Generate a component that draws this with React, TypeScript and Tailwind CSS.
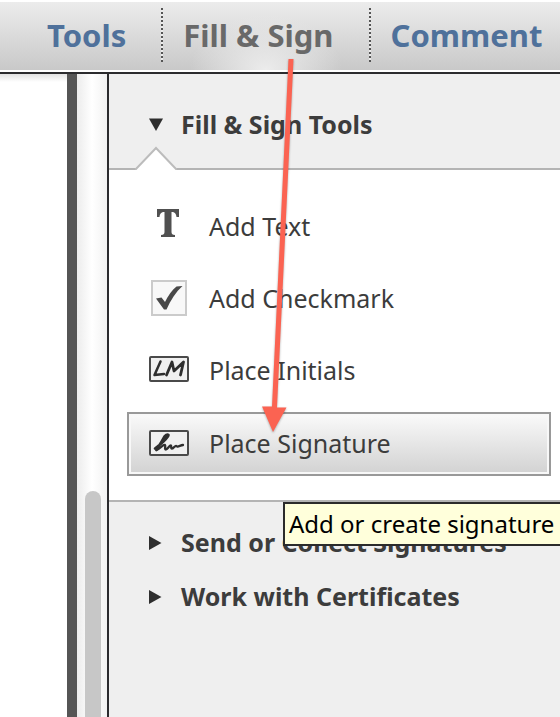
const tools = [
  { label: "Add Text", icon: <TextIcon /> },
  { label: "Add Checkmark", icon: <CheckIcon /> },
  { label: "Place Initials", icon: <InitialsIcon /> },
];

const sections = ["Send or Collect Signatures", "Work with Certificates"];

export default function App() {
  return (
    <div className="relative flex min-h-screen flex-col overflow-hidden bg-white font-['Noto_Sans','Open_Sans',sans-serif] text-[#3c3c3c]">
      <TopTabs />
      <div className="flex grow">
        {/* Document area */}
        <div className="w-[67px] shrink-0 bg-linear-to-b from-[#e2e2e2] to-white to-[8px]" />
        <div className="w-[10px] shrink-0 bg-[#555555]" />
        <ScrollTrack />
        <ToolsPane />
      </div>
      <Arrow />
    </div>
  );
}

function TopTabs() {
  return (
    <nav className="flex h-[74px] items-stretch border-b-2 border-[#2b2b2e] bg-white pt-[2px] pb-[2px] text-[31px] font-bold whitespace-nowrap">
      <div className="flex grow bg-linear-to-b from-[#ececec] to-[#c9c9c9] pl-[47px] [text-shadow:0_2px_0_#ffffff]">
        <button className="pr-[35px] pb-[2px] text-[#4f719b]">Tools</button>
        <Divider />
        <button className="bg-[radial-gradient(ellipse_76px_56px_at_50%_100%,#ececec,transparent)] pr-[35px] pb-[2px] pl-[20px] text-[#696969]">
          Fill &amp; Sign
        </button>
        <Divider />
        <button className="pb-[2px] pl-[20px] text-[#4f719b]">Comment</button>
      </div>
    </nav>
  );
}

function Divider() {
  return (
    <div className="mt-[6px] mb-[8px] w-[2px] shrink-0 bg-[repeating-linear-gradient(to_bottom,#555555_0_2px,#ececec_2px_4px)]" />
  );
}

function ScrollTrack() {
  return (
    <div className="flex w-[30px] shrink-0 bg-linear-to-r from-[#ececec] via-white to-[#f2f2f2] pt-[417px] pl-[8px]">
      <div className="w-[16px] rounded-t-full bg-[#c7c7c7]" />
    </div>
  );
}

function ToolsPane() {
  return (
    <aside className="min-w-0 grow border-l-2 border-[#2b2b2e] bg-[#efefef]">
      {/* Open section */}
      <div className="relative h-[96px] border-b-2 border-[#b4b4b4]">
        <button className="flex h-[102px] w-full items-center pl-10 text-left text-[25px] font-bold whitespace-nowrap">
          <svg className="mr-[18px] h-[14px] w-[14px]" viewBox="0 0 14 14">
            <path d="M0 0.500h14L7 13z" fill="#2e2e2e" />
          </svg>
          Fill &amp; Sign Tools
        </button>
        <svg
          className="absolute -bottom-[2px] left-[26px] h-[24px] w-[42px]"
          viewBox="0 0 42 24"
        >
          <path d="M0 24 L1 23 L21 2 L41 23 L42 24z" fill="#ffffff" />
          <path
            d="M0 23 H1 L21 2 L41 23 H42"
            fill="none"
            stroke="#bcbcbc"
            strokeWidth="2"
          />
        </svg>
      </div>
      <ul className="border-b-2 border-[#b4b4b4] bg-white pt-[21px] pb-6 text-[25px] whitespace-nowrap">
        {tools.map((tool) => (
          <li key={tool.label}>
            <button className="flex h-[72px] w-full items-center pl-10 text-left">
              <span className="w-[60px] shrink-0">{tool.icon}</span>
              {tool.label}
            </button>
          </li>
        ))}
        <li className="relative mt-[5px] mr-[9px] ml-[18px]">
          <button className="flex h-[64px] w-full items-center border-2 border-[#999999] bg-linear-to-b from-[#fafafa] to-[#d2d2d2] pl-[20px] text-left shadow-[inset_0_0_0_2px_#f8f8f8]">
            <span className="w-[60px] shrink-0">
              <SignatureIcon />
            </span>
            Place Signature
          </button>
          <div
            role="tooltip"
            className="absolute top-[90px] left-[156px] z-10 flex h-[44px] items-center border-2 border-[#2b2b2b] bg-[#ffffdb] pr-3 pl-1 text-2xl text-black"
          >
            Add or create signature
          </div>
        </li>
      </ul>
      {/* Closed sections */}
      <div className="pt-[14px] text-[25px] font-bold whitespace-nowrap">
        {sections.map((name) => (
          <button
            key={name}
            className="flex h-[54px] w-full items-center pl-10 text-left"
          >
            <svg className="mr-[18px] h-[14px] w-[14px]" viewBox="0 0 14 14">
              <path d="M0 0v14L12.500 7z" fill="#2e2e2e" />
            </svg>
            {name}
          </button>
        ))}
      </div>
    </aside>
  );
}

function TextIcon() {
  return (
    <svg className="ml-[8px] h-[28px] w-[22px] -translate-y-1" viewBox="0 0 22 28">
      <path
        d="M0 0H22V8H19.500C19 4.500 18 3 14.500 3V23C14.500 25 15.500 26 18 26V28H4V26C6.500 26 7.500 25 7.500 23V3C4 3 3 4.500 2.500 8H0Z"
        fill="#505050"
      />
    </svg>
  );
}

function CheckIcon() {
  return (
    <svg className="ml-[2px] h-[36px] w-[36px] -translate-y-px" viewBox="0 0 36 36">
      <rect x="1" y="1" width="34" height="34" fill="#f8f8f8" stroke="#cbcbcb" strokeWidth="2" />
      <path d="M5 18.500L10.500 17.500L14 22C17 16 21 10 25.500 6.500L31.500 6C25 12 19.500 20 15.500 29.500L13 29.500Z" fill="#484848" />
    </svg>
  );
}

function InitialsIcon() {
  return (
    <svg className="h-[26px] w-[40px] -translate-y-0.5" viewBox="0 0 40 26">
      <rect x="1" y="1" width="38" height="24" rx="1" fill="#f0f0f0" stroke="#4a4a4a" strokeWidth="2" />
      <g fill="none" stroke="#2e2e2e" strokeLinejoin="round" strokeLinecap="round">
        <path d="M11.500 5.500L5.500 19L15 18" strokeWidth="2.500" />
        <path d="M17.500 19L23 6L25 15L34.500 6L31.500 19" strokeWidth="2.800" />
      </g>
    </svg>
  );
}

function SignatureIcon() {
  return (
    <svg className="h-[26px] w-[40px] -translate-y-px" viewBox="0 0 40 26">
      <rect x="1" y="1" width="38" height="24" rx="1" fill="#f0f0f0" stroke="#4a4a4a" strokeWidth="2" />
      <g fill="none" stroke="#2e2e2e" strokeLinejoin="round" strokeLinecap="round">
        <path d="M6 18.500C11 15 19 8 19.500 5C19 3.500 16 5 14 9C12 13 9 17 7.500 20" strokeWidth="2.600" />
        <path d="M7.500 20C11 19 13.500 14.500 16 15C17 16 15 19.500 17 19.500C19 19 20.500 15 22 15.500C22.500 16.500 21.500 19 23.500 18.500C25.500 17 26.500 15 27.500 16C28 17.500 31 15.500 34 15" strokeWidth="2.300" />
      </g>
    </svg>
  );
}

// Pointer from the Fill & Sign tab down to Place Signature
function Arrow() {
  return (
    <svg
      className="pointer-events-none absolute top-[59px] left-[260px] h-[376px] w-[36px] drop-shadow-[0_1px_1px_rgba(0,0,0,0.3)]"
      viewBox="0 0 36 376"
    >
      <path d="M28.500 0H33.500L17 348.500H26.500L13 373L2 347.500H12Z" fill="#fb6352" />
    </svg>
  );
}
